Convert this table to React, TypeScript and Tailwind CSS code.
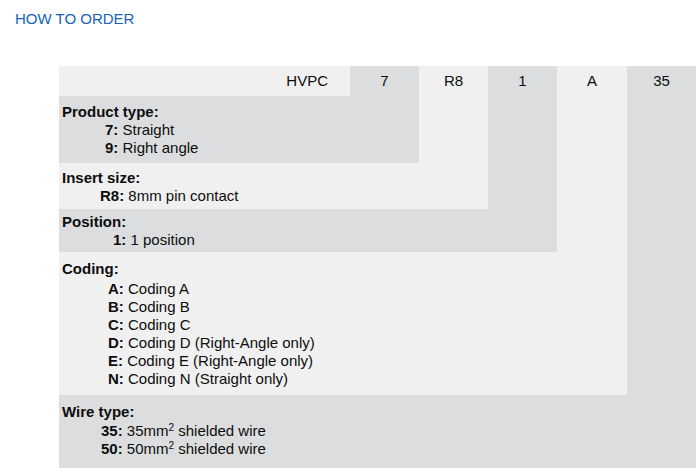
import React from 'react';

type Item = { code: string; label: React.ReactNode };

interface SectionProps {
  title: string;
  items: Item[];
  indent: string;
  className: string;
}

const LIGHT = 'bg-[#f0f0f0]';
const GRAY = 'bg-[#dcdddf]';

const Section: React.FC<SectionProps> = ({ title, items, indent, className }) => (
  <div className={className}>
    <div className="pl-[3px] font-bold leading-[18px]">{title}</div>
    <div className={indent}>
      {items.map((it) => (
        <div key={it.code} className="leading-[18px]">
          <span className="font-bold">{it.code}:</span> {it.label}
        </div>
      ))}
    </div>
  </div>
);

const Mm2: React.FC<{ n: string }> = ({ n }) => (
  <>
    {n}mm<sup className="text-[10px]">2</sup> shielded wire
  </>
);

export default function App() {
  return (
    <div
      className="min-h-[468px] w-[697px] bg-white text-[15px] text-[#0d0d0d]"
      style={{ fontFamily: '"Liberation Sans", Arial, sans-serif' }}
    >
      <h2 className="px-[15px] pt-[10px] text-[15px] leading-[18px] text-[#1763b8]">HOW TO ORDER</h2>

      <div className="ml-[59px] mt-[38px] grid w-[637px] grid-cols-[291px_69px_69px_69px_70px_69px] grid-rows-[30px_67px_46px_43px_143px_73px]">
        {/* header row */}
        <div className={`${LIGHT} col-start-1 row-start-1 pr-[22px] pt-[6px] text-right leading-[18px]`}>HVPC</div>
        <div className={`${GRAY} col-start-2 row-start-1 pt-[6px] text-center leading-[18px]`}>7</div>
        <div className={`${LIGHT} col-start-3 row-span-2 row-start-1 pt-[6px] text-center leading-[18px]`}>R8</div>
        <div className={`${GRAY} col-start-4 row-span-3 row-start-1 pt-[6px] text-center leading-[18px]`}>1</div>
        <div className={`${LIGHT} col-start-5 row-span-4 row-start-1 pt-[6px] text-center leading-[18px]`}>A</div>
        <div className={`${GRAY} col-start-6 row-span-5 row-start-1 pt-[6px] text-center leading-[18px]`}>35</div>

        <Section
          className={`${GRAY} col-span-2 col-start-1 row-start-2 pt-[7px]`}
          title="Product type:"
          indent="pl-[46px]"
          items={[
            { code: '7', label: 'Straight' },
            { code: '9', label: 'Right angle' },
          ]}
        />
        <Section
          className={`${LIGHT} col-span-3 col-start-1 row-start-3 pt-[6px]`}
          title="Insert size:"
          indent="pl-[41px]"
          items={[{ code: 'R8', label: '8mm pin contact' }]}
        />
        <Section
          className={`${GRAY} col-span-4 col-start-1 row-start-4 pt-[4px]`}
          title="Position:"
          indent="pl-[54px]"
          items={[{ code: '1', label: '1 position' }]}
        />
        <Section
          className={`${LIGHT} col-span-5 col-start-1 row-start-5 pt-[8px]`}
          title="Coding:"
          indent="pl-[49px] pt-[2px]"
          items={[
            { code: 'A', label: 'Coding A' },
            { code: 'B', label: 'Coding B' },
            { code: 'C', label: 'Coding C' },
            { code: 'D', label: 'Coding D (Right-Angle only)' },
            { code: 'E', label: 'Coding E (Right-Angle only)' },
            { code: 'N', label: 'Coding N (Straight only)' },
          ]}
        />
        <Section
          className={`${GRAY} col-span-6 col-start-1 row-start-6 pt-[8px]`}
          title="Wire type:"
          indent="pl-[42px] pt-[1px]"
          items={[
            { code: '35', label: <Mm2 n="35" /> },
            { code: '50', label: <Mm2 n="50" /> },
          ]}
        />
      </div>
    </div>
  );
}
